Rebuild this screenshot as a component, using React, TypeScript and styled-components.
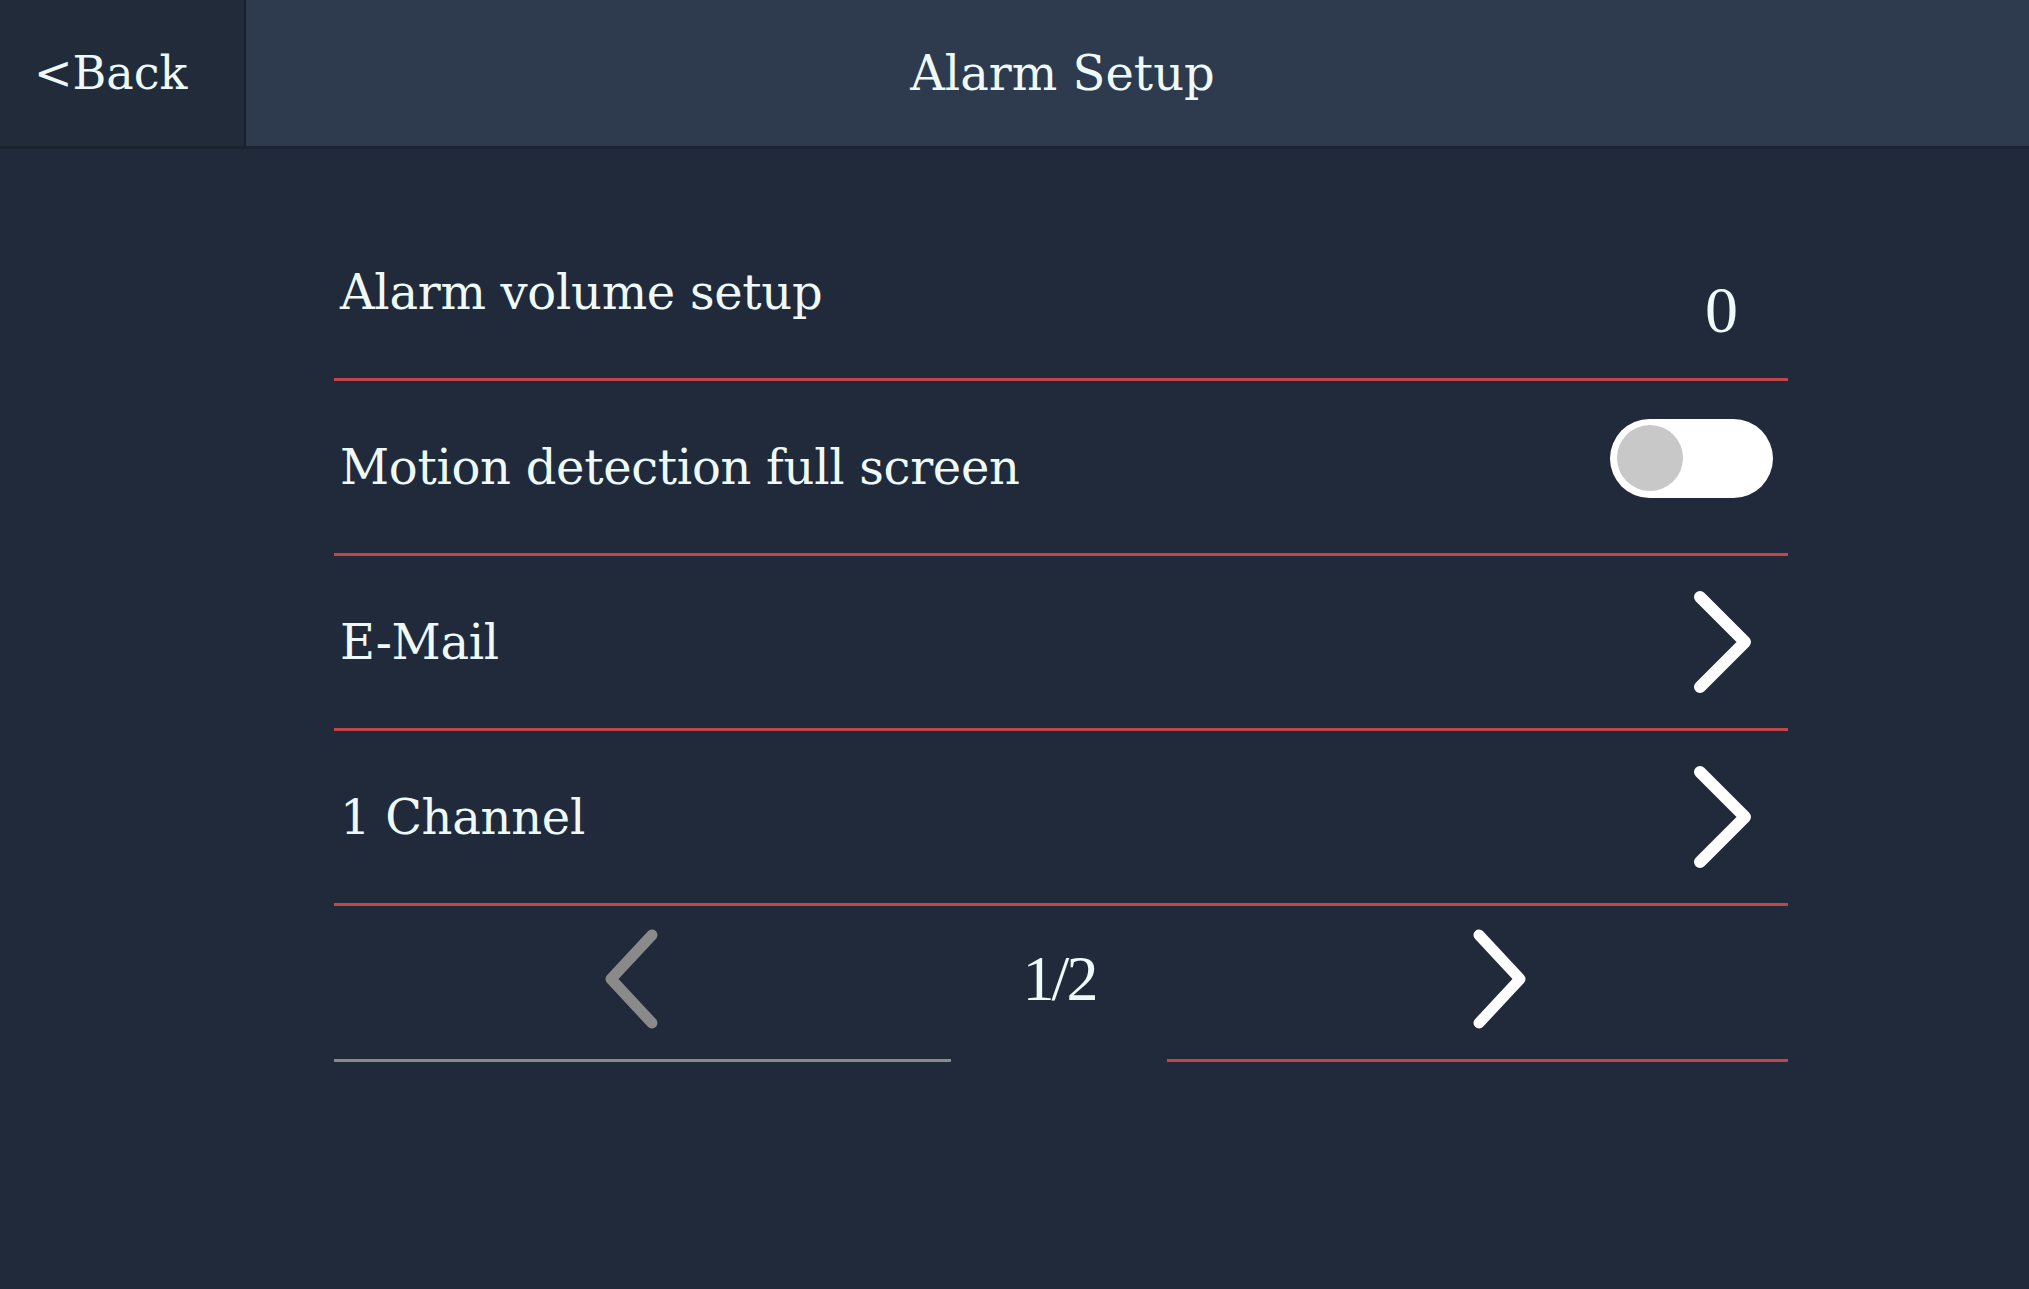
import styled, { createGlobalStyle } from 'styled-components';

const GlobalStyle = createGlobalStyle`
  html, body {
    margin: 0;
    padding: 0;
    background: #212a3a;
  }
`;

const Page = styled.div`
  width: 2029px;
  min-height: 1289px;
  background: #212a3a;
  color: #eefafa;
  font-family: 'DejaVu Serif', 'Liberation Serif', serif;
`;

const Header = styled.header`
  display: flex;
  height: 146px;
  background: #2e3a4e;
  border-bottom: 3px solid #1b2331;
`;

const BackButton = styled.button`
  width: 246px;
  display: flex;
  align-items: center;
  padding: 0 0 0 34px;
  background: #222b3a;
  border: none;
  border-right: 2px solid #19202d;
  color: #eefafa;
  font-family: inherit;
  font-size: 46px;
  cursor: pointer;
`;

const Title = styled.h1`
  flex: 1;
  margin: 0;
  padding-right: 150px;
  display: flex;
  align-items: center;
  justify-content: center;
  font-size: 48px;
  font-weight: 400;
`;

const List = styled.main`
  margin: 57px 0 0 334px;
  width: 1454px;
`;

const Row = styled.div`
  height: 172px;
  display: flex;
  align-items: center;
  justify-content: space-between;
  padding-left: 6px;
  border-bottom: 3px solid #c2454a;
`;

const Label = styled.span`
  font-size: 48px;
  letter-spacing: -0.3px;
`;

const Value = styled.span`
  font-family: 'Liberation Serif', serif;
  font-size: 66px;
  margin: 36px 50px 0 0;
`;

const Toggle = styled.div<{ $on?: boolean }>`
  width: 163px;
  height: 79px;
  border-radius: 40px;
  background: #ffffff;
  margin: 0 15px 18px 0;
  display: flex;
  align-items: center;
  padding: 0 7px;
  box-sizing: border-box;
  justify-content: ${(p) => (p.$on ? 'flex-end' : 'flex-start')};
`;

const Knob = styled.div`
  width: 66px;
  height: 66px;
  border-radius: 50%;
  background: #c8c8c8;
`;

const Arrow = styled.svg`
  width: 59px;
  height: 104px;
  margin-right: 36px;
`;

const Pager = styled.div`
  display: grid;
  grid-template-columns: 617px 216px 1fr;
  height: 156px;
`;

const PageButton = styled.button<{ $active?: boolean; $left?: number; $right?: number }>`
  display: flex;
  align-items: center;
  justify-content: center;
  padding: 0 ${(p) => p.$right ?? 0}px 8px ${(p) => p.$left ?? 0}px;
  background: none;
  border: none;
  border-bottom: 3px solid ${(p) => (p.$active ? '#c2454a' : '#8a8a8a')};
  cursor: pointer;
`;

const PageCount = styled.div`
  display: flex;
  align-items: center;
  justify-content: center;
  padding-bottom: 10px;
  font-family: 'Liberation Serif', serif;
  font-size: 64px;
  letter-spacing: -3px;
`;

const PagerArrow = styled.svg`
  width: 58px;
  height: 100px;
`;

const RowChevron = () => (
  <Arrow viewBox="0 0 59 104">
    <path
      d="M7 7 L52 52 L7 97"
      fill="none"
      stroke="#ffffff"
      strokeWidth="12"
      strokeLinecap="round"
      strokeLinejoin="round"
    />
  </Arrow>
);

export default function App() {
  return (
    <Page>
      <GlobalStyle />
      <Header>
        <BackButton>&lt;Back</BackButton>
        <Title>Alarm Setup</Title>
      </Header>
      <List>
        <Row>
          <Label>Alarm volume setup</Label>
          <Value>0</Value>
        </Row>
        <Row>
          <Label>Motion detection full screen</Label>
          <Toggle>
            <Knob />
          </Toggle>
        </Row>
        <Row>
          <Label>E-Mail</Label>
          <RowChevron />
        </Row>
        <Row>
          <Label>1 Channel</Label>
          <RowChevron />
        </Row>
        <Pager>
          <PageButton $right={24}>
            <PagerArrow viewBox="0 0 58 100">
              <path
                d="M50 6 L9 50 L50 94"
                fill="none"
                stroke="#8a8a8a"
                strokeWidth="11"
                strokeLinecap="round"
                strokeLinejoin="round"
              />
            </PagerArrow>
          </PageButton>
          <PageCount>1/2</PageCount>
          <PageButton $active $left={44}>
            <PagerArrow viewBox="0 0 58 100">
              <path
                d="M8 6 L49 50 L8 94"
                fill="none"
                stroke="#ffffff"
                strokeWidth="11"
                strokeLinecap="round"
                strokeLinejoin="round"
              />
            </PagerArrow>
          </PageButton>
        </Pager>
      </List>
    </Page>
  );
}
